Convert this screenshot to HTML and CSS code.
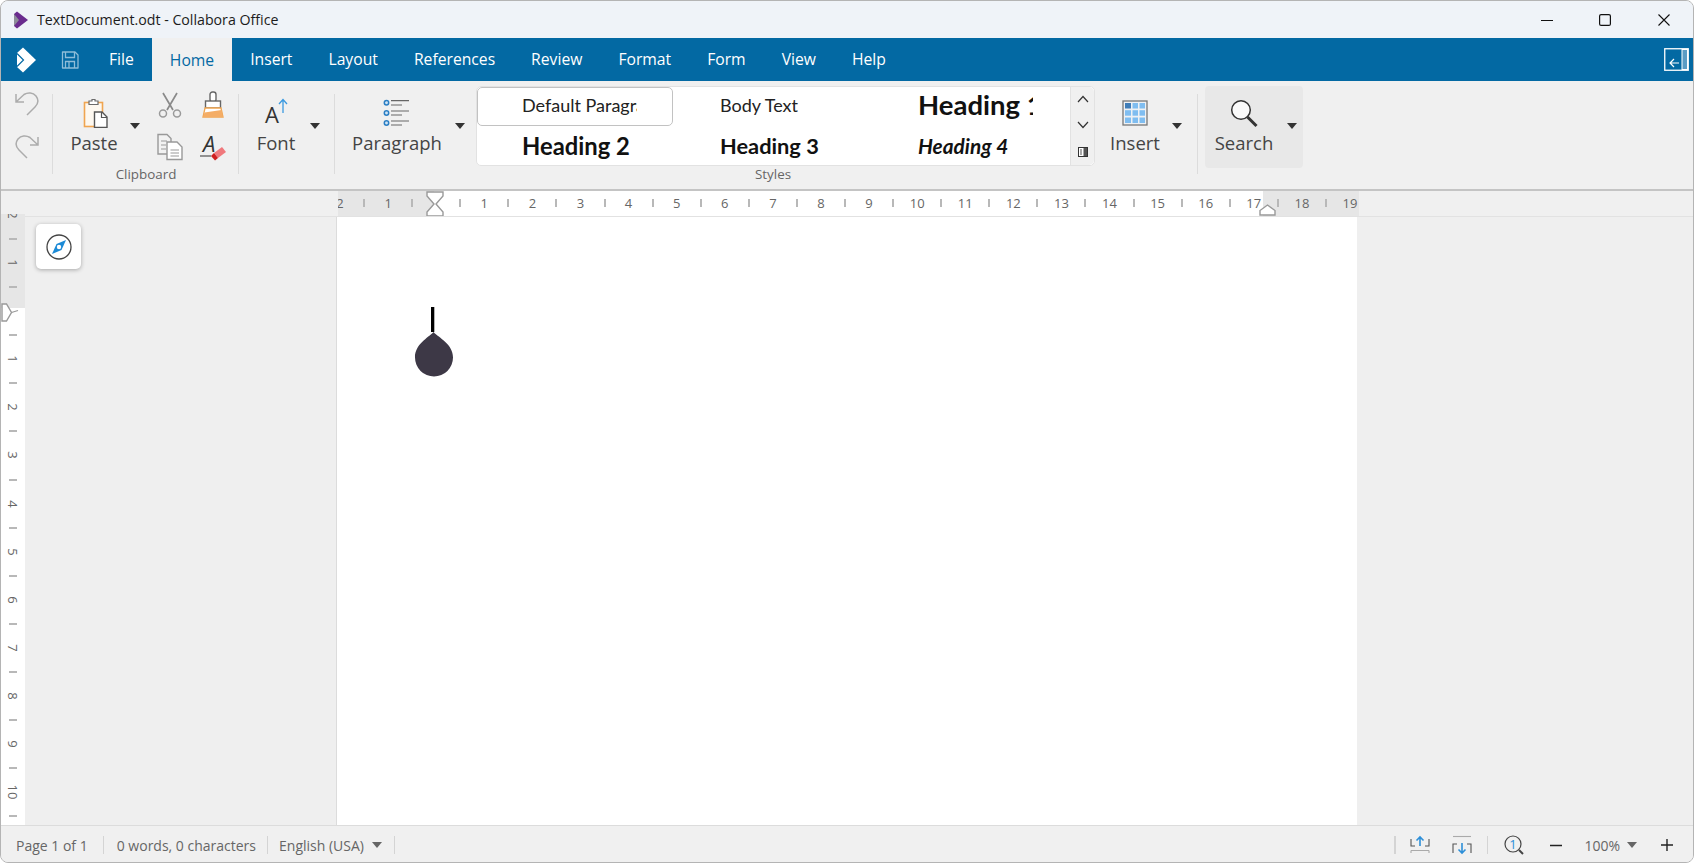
FILE: index.html

```html
<!DOCTYPE html>
<html lang="en">
<head>
    <meta charset="UTF-8">
    <meta name="viewport" content="width=device-width, initial-scale=1.0">
    <title>TextDocument.odt - Collabora Office</title>
    <link rel="stylesheet" href="styles.css">
</head>
<body>
<div class="window">

    <header class="titlebar">
        <svg class="app-icon" width="16" height="18" viewBox="0 0 16 18">
            <path d="M1 3 L4 0.5 L15 9 L4 17.5 L1 15 Z" fill="#6a2c8e"/>
            <path d="M1 3 L6 9 L1 15 Z" fill="#8d8d99"/>
        </svg>
        <span class="title-text">TextDocument.odt - Collabora Office</span>
        <div class="win-controls">
            <div class="win-btn">
                <svg width="12" height="12" viewBox="0 0 12 12"><path d="M0 6.5 H12" stroke="#111" stroke-width="1.2"/></svg>
            </div>
            <div class="win-btn">
                <svg width="12" height="12" viewBox="0 0 12 12"><rect x="0.6" y="0.6" width="10.8" height="10.8" rx="1.5" fill="none" stroke="#111" stroke-width="1.2"/></svg>
            </div>
            <div class="win-btn">
                <svg width="12" height="12" viewBox="0 0 12 12"><path d="M0.5 0.5 L11.5 11.5 M11.5 0.5 L0.5 11.5" stroke="#111" stroke-width="1.1"/></svg>
            </div>
        </div>
    </header>

    <nav class="menubar">
        <svg class="menu-logo" width="20" height="26" viewBox="0 0 20 26">
            <path d="M1 6 L7 0.5 L20 13 L7 25.5 L1 20 Z" fill="#fff"/>
            <path d="M1 6.5 L7.5 13 L1 19.5" fill="none" stroke="#0369a3" stroke-width="1.2"/>
        </svg>
        <svg class="menu-save" width="18" height="18" viewBox="0 0 18 18" fill="none" stroke="#8fbdd8" stroke-width="1.3">
            <path d="M1.5 1 H14 L17 4 V17 H1.5 Z" stroke-linejoin="round"/>
            <path d="M4.5 1 V6.5 H13.5 V1"/>
            <path d="M4.5 17 V10.5 H13.5 V17 M8 11 V17"/>
        </svg>
        <div class="tab">File</div>
        <div class="tab active">Home</div>
        <div class="tab">Insert</div>
        <div class="tab">Layout</div>
        <div class="tab">References</div>
        <div class="tab">Review</div>
        <div class="tab">Format</div>
        <div class="tab">Form</div>
        <div class="tab">View</div>
        <div class="tab">Help</div>
        <svg class="menu-collapse" width="25" height="23" viewBox="0 0 25 23" fill="none">
            <rect x="0.75" y="0.75" width="23.5" height="21.5" stroke="#fff" stroke-width="1.3"/>
            <rect x="18" y="1.5" width="5.5" height="20" fill="#5b9cc4" stroke="#fff" stroke-width="1"/>
            <path d="M15 15 H6 M10 11 L6 15 L10 19" stroke="#fff" stroke-width="1.2"/>
        </svg>
    </nav>

    <div class="toolbar">
        <div class="undo-group">
            <svg width="26" height="26" viewBox="0 0 26 26" fill="none" stroke="#acacac" stroke-width="1.5">
                <path d="M2 3 V11 H10 M2 11 L10 3.5 C14 1 19 1.5 22 5 C25 9 24 13 21 16 L13 24"/>
            </svg>
            <svg width="26" height="26" viewBox="0 0 26 26" fill="none" stroke="#acacac" stroke-width="1.5">
                <path d="M24 3 V11 H16 M24 11 L16 3.5 C12 1 7 1.5 4 5 C1 9 2 13 5 16 L13 24"/>
            </svg>
        </div>
        <div class="sep"></div>

        <div class="group group-clipboard">
            <div class="group-body">
                <div class="big big-paste">
                    <svg width="30" height="30" viewBox="0 0 30 30">
                        <rect x="5.5" y="4.5" width="18" height="24" fill="#fdf8f0" stroke="#f0a550" stroke-width="1.6"/>
                        <path d="M10 5 V3 H13 V1.5 H16 V3 H19 V6.5 H10 Z" fill="#fff" stroke="#6b6b6b" stroke-width="1.2"/>
                        <path d="M15.5 14 H23 L28 19 V29.5 H15.5 Z" fill="#fff" stroke="#555" stroke-width="1.4"/>
                        <path d="M22.5 14 V19.5 H28" fill="none" stroke="#555" stroke-width="1.2"/>
                    </svg>
                    <span class="big-label">Paste</span>
                </div>
                <div class="caret caret-paste"></div>
                <div class="small-grid">
                    <svg width="24" height="26" viewBox="0 0 24 26" fill="none" stroke="#9a9a9a" stroke-width="1.5">
                        <path d="M5 1 L15 18 M19 1 L9 18" stroke="#8a8a8a" stroke-width="1.7"/>
                        <circle cx="5" cy="21.5" r="3.5"/>
                        <circle cx="19" cy="21.5" r="3.5"/>
                    </svg>
                    <svg class="brush-icon" width="22" height="28" viewBox="0 0 22 28">
                        <rect x="8" y="1" width="6" height="10" rx="2.5" fill="#fff" stroke="#666" stroke-width="1.4"/>
                        <rect x="3.500" y="10" width="15" height="7" fill="#fff" stroke="#666" stroke-width="1.4"/>
                        <path d="M3 17 H19 L21 26 H1 Z" fill="#fff" stroke="#f0a550" stroke-width="1.3"/>
                        <path d="M2.500 21.500 L19.500 19 L21 26 H1 Z" fill="#f4ad66"/>
                    </svg>
                    <svg width="28" height="28" viewBox="0 0 28 28" fill="none" stroke="#999" stroke-width="1.4">
                        <path d="M2 1.5 H11 L15 5.5 V21 H2 Z" fill="#f2f2f2"/>
                        <path d="M5 8 H11 M5 12 H10 M5 16 H10" stroke-width="1.1"/>
                        <path d="M11 9 H21 L26 14 V26.5 H11 Z" fill="#fff"/>
                        <path d="M14.5 17 H23 M14.5 20 H23 M14.5 23 H23" stroke-width="1.2"/>
                    </svg>
                    <svg class="icon-open" width="26" height="28" viewBox="0 0 26 28">
                        <text x="3" y="19" class="icon-letter" font-size="22">A</text>
                        <path d="M0 23 H11" stroke="#333" stroke-width="1.1"/>
                        <path d="M14 20 L22 14 L26 19 L18 25 Z" fill="#f0787c"/>
                        <path d="M11 23 L14 20 L18 25 L15 27.5 Z" fill="#cf1f1f"/>
                    </svg>
                </div>
            </div>
            <div class="group-label">Clipboard</div>
        </div>
        <div class="sep"></div>

        <div class="group group-font">
            <div class="group-body">
                <div class="big big-font">
                    <svg class="icon-open" width="30" height="30" viewBox="0 0 30 30">
                        <text x="4" y="25" class="icon-letter icon-letter-up" font-size="22">A</text>
                        <path d="M22 15 V2 M18 6 L22 1.5 L26 6" fill="none" stroke="#3b9ae0" stroke-width="1.3"/>
                    </svg>
                    <span class="big-label">Font</span>
                </div>
                <div class="caret caret-font"></div>
            </div>
        </div>
        <div class="sep"></div>

        <div class="group group-para">
            <div class="group-body">
                <div class="big big-para">
                    <svg width="30" height="30" viewBox="0 0 30 30" fill="none">
                        <circle cx="4.500" cy="4.700" r="2.200" fill="#cfe4f5" stroke="#2c7fc4" stroke-width="1.500"/>
                        <circle cx="4.500" cy="15" r="2.200" fill="#cfe4f5" stroke="#2c7fc4" stroke-width="1.500"/>
                        <circle cx="4.500" cy="25" r="2.200" fill="#cfe4f5" stroke="#2c7fc4" stroke-width="1.500"/>
                        <path d="M9 2.700 H27 M9 7 H20 M9 13 H27 M9 17 H20 M9 23 H27 M9 27 H20" stroke="#666" stroke-width="1.200"/>
                    </svg>
                    <span class="big-label">Paragraph</span>
                </div>
                <div class="caret caret-para"></div>
            </div>
        </div>

        <div class="group group-styles">
            <div class="styles-box">
                <div class="style-grid">
                    <div class="style-cell style-top selected"><span class="style-text">Default Paragraph Style</span></div>
                    <div class="style-cell style-top"><span class="style-text">Body Text</span></div>
                    <div class="style-cell style-top"><span class="style-text style-h1">Heading 1</span></div>
                    <div class="style-cell"><span class="style-text style-h2">Heading 2</span></div>
                    <div class="style-cell"><span class="style-text style-h3">Heading 3</span></div>
                    <div class="style-cell"><span class="style-text style-h4">Heading 4</span></div>
                </div>
                <div class="style-side">
                    <svg width="12" height="8" viewBox="0 0 12 8"><path d="M1 7 L6 1.5 L11 7" fill="none" stroke="#333" stroke-width="1.2"/></svg>
                    <svg width="12" height="8" viewBox="0 0 12 8"><path d="M1 1 L6 6.5 L11 1" fill="none" stroke="#333" stroke-width="1.2"/></svg>
                    <svg width="10" height="10" viewBox="0 0 10 10"><rect x="0.5" y="0.5" width="9" height="9" fill="#fff" stroke="#333"/><path d="M5.5 1 V9 H9 V1 Z" fill="#555"/><path d="M2 3 H4 M2 5 H4 M2 7 H4" stroke="#555"/></svg>
                </div>
            </div>
            <div class="group-label styles-label">Styles</div>
        </div>

        <div class="group group-insert">
            <div class="group-body">
                <div class="big big-insert">
                    <svg width="30" height="30" viewBox="0 0 30 30">
                        <rect x="3" y="3" width="24" height="24" fill="#eef1f4" stroke="#777" stroke-width="1.3"/>
                        <rect x="5" y="5" width="6" height="5.5" fill="#3f7db8"/>
                        <rect x="12.5" y="5" width="5.5" height="5.5" fill="#7fbdf0"/>
                        <rect x="19.5" y="5" width="5.5" height="5.5" fill="#7fbdf0"/>
                        <rect x="5" y="12.2" width="6" height="5.5" fill="#7fbdf0"/>
                        <rect x="12.5" y="12.2" width="5.5" height="5.5" fill="#7fbdf0"/>
                        <rect x="19.5" y="12.2" width="5.5" height="5.5" fill="#7fbdf0"/>
                        <rect x="5" y="19.5" width="6" height="5.5" fill="#7fbdf0"/>
                        <rect x="12.5" y="19.5" width="5.5" height="5.5" fill="#7fbdf0"/>
                        <rect x="19.5" y="19.5" width="5.5" height="5.5" fill="#7fbdf0"/>
                    </svg>
                    <span class="big-label">Insert</span>
                </div>
                <div class="caret caret-insert"></div>
            </div>
        </div>
        <div class="sep"></div>

        <div class="search-btn">
            <div class="big big-search">
                <svg width="30" height="30" viewBox="0 0 30 30" fill="none">
                    <circle cx="12" cy="12" r="9.300" fill="#fafafa" stroke="#333" stroke-width="1.500"/>
                    <path d="M18.500 19 L27.500 28" stroke="#333" stroke-width="3"/>
                </svg>
                <span class="big-label">Search</span>
            </div>
            <div class="caret caret-search"></div>
        </div>
    </div>

    <div class="hruler-row">
        <div class="hruler-track">
            <div class="rule-cells">
                <span>2</span><i></i><span>1</span><i></i><span></span><i></i>
                <span>1</span><i></i><span>2</span><i></i><span>3</span><i></i><span>4</span><i></i>
                <span>5</span><i></i><span>6</span><i></i><span>7</span><i></i><span>8</span><i></i>
                <span>9</span><i></i><span>10</span><i></i><span>11</span><i></i><span>12</span><i></i>
                <span>13</span><i></i><span>14</span><i></i><span>15</span><i></i><span>16</span><i></i>
                <span>17</span><i></i><span>18</span><i></i><span>19</span>
            </div>
            <svg class="margin-left-mark" width="18" height="26" viewBox="0 0 18 26">
                <path d="M1 1 H17 V5 L10 13 L17 21 V25 H1 V21 L8 13 L1 5 Z" fill="#fff" stroke="#999" stroke-width="1.4"/>
            </svg>
            <svg class="margin-right-mark" width="17" height="12" viewBox="0 0 17 12">
                <path d="M1 11 V6.5 L8.5 1 L16 6.5 V11 Z" fill="#fff" stroke="#999" stroke-width="1.4"/>
            </svg>
        </div>
    </div>

    <div class="workspace">
        <div class="vruler">
            <div class="vrule-cells">
                <span>2</span><i></i><span>1</span><i></i><span></span><i></i>
                <span>1</span><i></i><span>2</span><i></i><span>3</span><i></i><span>4</span><i></i>
                <span>5</span><i></i><span>6</span><i></i><span>7</span><i></i><span>8</span><i></i>
                <span>9</span><i></i><span>10</span><i></i>
            </div>
            <svg class="margin-top-mark" width="18" height="19" viewBox="0 0 18 19">
                <path d="M1 1 H5.5 L10.5 9.5 L5.5 18 H1 Z" fill="#fff" stroke="#999" stroke-width="1.4"/>
                <path d="M10.5 9.5 L17 7.5" stroke="#999" stroke-width="1.2"/>
            </svg>
        </div>
        <div class="gutter">
            <div class="nav-btn">
                <svg width="26" height="26" viewBox="0 0 26 26">
                    <circle cx="13" cy="13" r="12" fill="#fff" stroke="#444" stroke-width="1.3"/>
                    <path d="M20 6 L15.5 16 L6 20 L10.5 10 Z" fill="#1b8ad6"/>
                    <circle cx="13" cy="13" r="2.2" fill="#fff"/>
                </svg>
            </div>
        </div>
        <main class="page">
            <svg class="cursor" width="40" height="70" viewBox="0 0 40 70">
                <rect x="1" y="0" width="3.300" height="25" fill="#000"/>
                <path d="M3.500 25 C9 31 23 37 23 50.500 A19 19 0 0 1 -15 50.500 C-15 37 -2 31 3.500 25 Z" fill="#3d3846"/>
            </svg>
        </main>
        <div class="doc-right"></div>
    </div>

    <footer class="statusbar">
        <span class="status-text status-page">Page 1 of 1</span>
        <div class="status-sep status-sep-page"></div>
        <span class="status-text status-words">0 words, 0 characters</span>
        <div class="status-sep status-sep-words"></div>
        <span class="status-text status-lang">English (USA)</span>
        <div class="caret status-caret"></div>
        <div class="status-sep status-sep-lang"></div>

        <div class="status-sep status-sep-right"></div>
        <svg class="status-up" width="20" height="20" viewBox="0 0 20 20" fill="none">
            <path d="M1 4 V11 H5 M19 4 V11 H15" stroke="#555" stroke-width="1.1"/>
            <path d="M10 11 V2 M6.500 5.500 L10 2 L13.500 5.500" stroke="#2d8fd8" stroke-width="1.6"/>
            <path d="M1 15.500 H19 M1 15.500 V18 M19 15.500 V18" stroke="#aaa" stroke-width="1.1"/>
        </svg>
        <svg class="status-down" width="20" height="20" viewBox="0 0 20 20" fill="none">
            <path d="M1 1.500 H19" stroke="#aaa" stroke-width="1.1"/>
            <path d="M1 18 V9 H5 M19 18 V9 H15" stroke="#555" stroke-width="1.1"/>
            <path d="M10 8 V18 M6.500 14.500 L10 18 L13.500 14.500" stroke="#2d8fd8" stroke-width="1.6"/>
        </svg>
        <div class="status-sep status-sep-zoom"></div>
        <svg class="status-zoom" width="20" height="20" viewBox="0 0 20 20" fill="none">
            <circle cx="9" cy="9" r="8" stroke="#444" stroke-width="1.2"/>
            <text x="9" y="13.500" class="zoom-one" text-anchor="middle">1</text>
            <path d="M15 15 L19 19" stroke="#444" stroke-width="2"/>
        </svg>
        <svg class="status-minus" width="12" height="12" viewBox="0 0 12 12"><path d="M0 6.500 H12" stroke="#222" stroke-width="1.4"/></svg>
        <span class="status-text status-percent">100%</span>
        <div class="caret status-caret status-caret-zoom"></div>
        <svg class="status-plus" width="12" height="12" viewBox="0 0 12 12"><path d="M0 6 H12 M6 0 V12" stroke="#222" stroke-width="1.4"/></svg>
    </footer>
</div>
</body>
</html>
```

FILE: styles.css

```css
* {
    box-sizing: border-box;
}
html, body {
    margin: 0;
    padding: 0;
    height: 100%;
    background: #fff;
    overflow: hidden;
}
body {
    font-family: "Open Sans", "Noto Sans", sans-serif;
    color: #333;
}
.window {
    display: flex;
    flex-direction: column;
    height: 863px;
    border: 1px solid #b4b4b4;
    border-radius: 8px;
    overflow: hidden;
    background: #f0f0f0;
}
.icon-open {
    overflow: visible;
}

/* title bar */
.titlebar {
    display: flex;
    align-items: center;
    height: 37px;
    padding-left: 12px;
    background: #eff3f8;
    flex: none;
}
.app-icon {
    flex: none;
}
.title-text {
    margin-left: 8px;
    font-size: 14.200px;
    color: #1c1c1c;
}
.win-controls {
    display: flex;
    margin-left: auto;
    height: 100%;
}
.win-btn {
    display: flex;
    align-items: center;
    justify-content: center;
    width: 58.500px;
}

/* menu bar */
.menubar {
    display: flex;
    align-items: stretch;
    height: 43px;
    background: #0369a3;
    flex: none;
}
.menu-logo {
    align-self: center;
    margin-left: 15px;
    flex: none;
}
.menu-save {
    align-self: center;
    margin-left: 25px;
    margin-right: 12px;
    flex: none;
}
.tab {
    display: flex;
    align-items: center;
    padding: 0 18px 2px;
    font-size: 15.700px;
    color: #fff;
}
.tab.active {
    padding-bottom: 0;
    background: #f0f0f0;
    color: #0369a3;
}
.menu-collapse {
    align-self: center;
    margin-left: auto;
    margin-right: 4px;
}

/* toolbar */
.toolbar {
    display: flex;
    align-items: flex-start;
    height: 110px;
    border-bottom: 2px solid #c4c4c4;
    flex: none;
}
.sep {
    width: 1px;
    height: 80px;
    margin-top: 13px;
    margin-right: 1px;
    background: #dcdcdc;
    flex: none;
}
.undo-group {
    display: flex;
    flex-direction: column;
    align-items: center;
    gap: 17px;
    width: 51px;
    padding-top: 10px;
    flex: none;
}
.group {
    display: flex;
    flex-direction: column;
    flex: none;
}
.group-body {
    display: flex;
    height: 85px;
}
.group-label {
    height: 18px;
    line-height: 17px;
    font-size: 13.400px;
    text-align: center;
    color: #666;
}
.group-clipboard {
    width: 184px;
}
.group-font {
    width: 94px;
}
.group-para {
    width: 140px;
}
.group-insert {
    width: 102px;
}
.big {
    display: flex;
    flex-direction: column;
    align-items: center;
    padding-top: 17px;
    flex: none;
}
.big-label {
    margin-top: 3px;
    line-height: 24px;
    font-size: 18.500px;
    color: #444;
}
.big-paste {
    width: 76px;
    margin-left: 2px;
}
.big-font {
    width: 70px;
    margin-left: 1px;
}
.big-para {
    width: 100px;
    margin-left: 11px;
}
.big-insert {
    width: 70px;
    margin-left: 5px;
}
.big-search {
    width: 78px;
    padding-top: 12px;
}
.caret {
    width: 0;
    height: 0;
    margin-top: 42px;
    border-left: 5px solid transparent;
    border-right: 5px solid transparent;
    border-top: 6px solid #333;
    flex: none;
}
.caret-paste {
    margin-left: -2px;
}
.caret-font {
    margin-left: -1px;
}
.caret-para {
    margin-left: 8px;
}
.caret-insert {
    margin-left: 2px;
}
.caret-search {
    margin-left: 4px;
    margin-top: 37px;
}
.small-grid {
    display: grid;
    grid-template-columns: 43px 43px;
    grid-template-rows: 42px 42px;
    justify-items: center;
    align-items: center;
    margin-left: 8.500px;
    margin-top: 3px;
}
.brush-icon {
    margin-right: 1px;
}
.icon-letter {
    font-family: "Open Sans", sans-serif;
    font-style: italic;
    fill: #333;
}
.icon-letter-up {
    font-style: normal;
}

/* styles gallery */
.group-styles {
    width: 619px;
    padding-top: 5px;
}
.styles-box {
    display: flex;
    width: 619px;
    height: 80px;
    background: #fff;
    border: 1px solid #e2e2e2;
    border-radius: 5px;
}
.style-grid {
    display: grid;
    grid-template-columns: repeat(3, 198px);
    grid-template-rows: 39px 39px;
    flex: none;
}
.style-cell {
    display: flex;
    align-items: center;
    padding-left: 44px;
    border: 1px solid transparent;
    border-radius: 5px;
    overflow: hidden;
}
.style-top {
    padding-bottom: 4px;
}
.style-cell.selected {
    margin-right: 2px;
    border-color: #c2c2c2;
}
.style-text {
    display: block;
    width: 115px;
    overflow: hidden;
    white-space: nowrap;
    font-family: "Lato", sans-serif;
    font-size: 18px;
    color: #222;
}
.style-h1 {
    font-size: 27.500px;
    font-weight: 700;
    color: #111;
}
.style-h2 {
    font-size: 23.800px;
    font-weight: 700;
    color: #111;
}
.style-h3 {
    font-size: 21.800px;
    font-weight: 700;
    color: #111;
}
.style-h4 {
    font-size: 20.800px;
    font-weight: 700;
    font-style: italic;
    color: #111;
}
.style-side {
    display: flex;
    flex-direction: column;
    align-items: center;
    justify-content: space-between;
    width: 25px;
    margin-left: -1px;
    padding: 8px 0 8px;
    background: #f0f0f0;
    border-left: 1px solid #e2e2e2;
    border-radius: 0 5px 5px 0;
}
.styles-label {
    padding-right: 25px;
}
.search-btn {
    display: flex;
    width: 98px;
    height: 82px;
    margin-top: 5px;
    margin-left: 6px;
    background: #e8e8e8;
    border-radius: 4px;
    flex: none;
}

/* rulers */
.hruler-row {
    display: flex;
    height: 26px;
    background: #f0f0f0;
    border-bottom: 1px solid #e2e2e2;
    margin-left: 24px;
    padding-left: 313px;
    flex: none;
}
.hruler-track {
    position: relative;
    width: 1021px;
    overflow: hidden;
    background: linear-gradient(to right, #e6e6e6 0, #e6e6e6 96px, #fff 96px, #fff 925px, #e6e6e6 925px);
}
.rule-cells {
    display: flex;
    height: 100%;
    margin-left: -10px;
}
.rule-cells span, .rule-cells i {
    display: flex;
    align-items: center;
    justify-content: center;
    width: 24.050px;
    padding-bottom: 2px;
    flex: none;
    font-size: 13px;
    font-style: normal;
    color: #666;
}
.rule-cells i::before {
    content: "";
    width: 2px;
    height: 8px;
    background: #b8b8b8;
}
.margin-left-mark {
    position: absolute;
    left: 88px;
    top: 0;
}
.margin-right-mark {
    position: absolute;
    left: 921px;
    bottom: 0;
}
.workspace {
    display: flex;
    flex: 1;
    min-height: 0;
}
.vruler {
    position: relative;
    width: 24px;
    margin-top: -3px;
    overflow: hidden;
    background: linear-gradient(to bottom, #e6e6e6 0, #e6e6e6 94px, #fff 94px);
    flex: none;
}
.vrule-cells {
    display: flex;
    flex-direction: column;
    margin-top: -11px;
}
.vrule-cells span, .vrule-cells i {
    display: flex;
    align-items: center;
    justify-content: center;
    height: 24.050px;
    flex: none;
    font-size: 13px;
    font-style: normal;
    color: #666;
}
.vrule-cells span {
    transform: rotate(90deg);
}
.vrule-cells i::before {
    content: "";
    width: 8px;
    height: 2px;
    background: #b8b8b8;
}
.margin-top-mark {
    position: absolute;
    left: 0;
    top: 89px;
}
.gutter {
    width: 311px;
    padding: 7px 0 0 11px;
    background: #efefef;
    flex: none;
}
.nav-btn {
    display: flex;
    align-items: center;
    justify-content: center;
    width: 45px;
    height: 45px;
    background: #fff;
    border-radius: 5px;
    box-shadow: 0 1px 4px rgba(0,0,0,0.3);
}
.page {
    width: 1021px;
    padding: 90px 0 0 93px;
    background: #fff;
    border-left: 1px solid #dcdcdc;
    flex: none;
}
.cursor {
    display: block;
    overflow: visible;
}
.doc-right {
    flex: 1;
    background: #efefef;
}

/* status bar */
.statusbar {
    display: flex;
    align-items: center;
    height: 37px;
    padding: 2px 20px 0 15px;
    background: #f0f0f0;
    border-top: 1px solid #dcdcdc;
    flex: none;
}
.status-text {
    font-size: 14px;
    color: #666;
    white-space: nowrap;
}
.status-sep {
    width: 1px;
    height: 18px;
    background: #d4d4d4;
    flex: none;
}
.status-sep-page {
    margin-left: 15px;
}
.status-words {
    margin-left: 13px;
}
.status-sep-words {
    margin-left: 11px;
}
.status-lang {
    margin-left: 11px;
}
.status-caret {
    margin: 0 0 0 8px;
    border-top-color: #666;
}
.status-sep-lang {
    margin-left: 12px;
}
.status-sep-right {
    width: 2px;
    margin-left: auto;
}
.status-up {
    margin-left: 14px;
}
.status-down {
    margin-left: 22px;
}
.status-sep-zoom {
    margin-left: 15px;
}
.status-zoom {
    margin-left: 16px;
}
.zoom-one {
    font-family: "Open Sans", sans-serif;
    font-size: 13px;
    fill: #2d8fd8;
}
.status-minus {
    margin-left: 26px;
}
.status-percent {
    margin-left: 22px;
}
.status-caret-zoom {
    margin-left: 7px;
}
.status-plus {
    margin-left: 24px;
}
```
